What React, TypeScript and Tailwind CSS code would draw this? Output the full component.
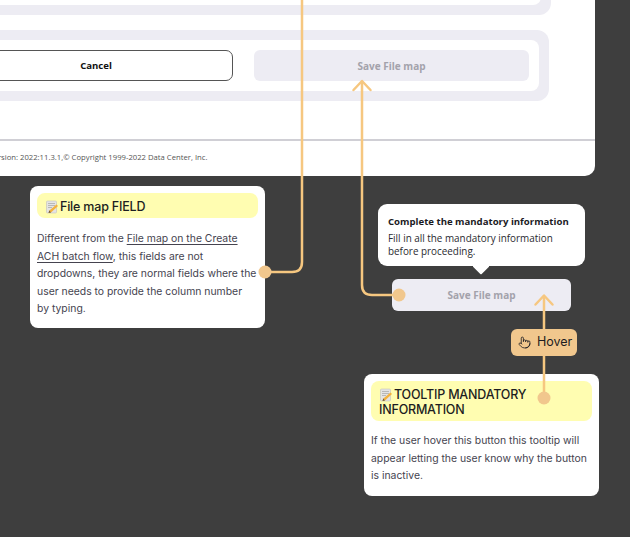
import { Pointer } from 'lucide-react'

const inter = 'font-["Inter",sans-serif]'
const noto = 'font-["Open_Sans",sans-serif]'

function MemoIcon() {
  return (
    <svg width="14" height="14" viewBox="0 0 14 14" className="shrink-0">
      <rect x="1.5" y="1" width="10" height="12" rx="1" fill="#e4e4e4" stroke="#b9b9b9" strokeWidth="0.5" />
      <path d="M3 3.5h7M3 5.5h7M3 7.5h4" stroke="#9a9a9a" strokeWidth="0.6" />
      <path d="M11.5 4.5L13 6L6 12.5L3.5 13L4.3 10.5Z" fill="#f3b23e" />
      <path d="M4.3 10.5L3.5 13L6 12.5Z" fill="#6b5a44" />
    </svg>
  )
}

function Connectors() {
  return (
    <svg width="630" height="537" viewBox="0 0 630 537" fill="none" className="absolute left-0 top-0">
      <g stroke="#f6c780" strokeWidth="2.500" strokeLinecap="round" strokeLinejoin="round">
        <path d="M302 -2V262Q302 272 292 272H265" />
        <path d="M362 82V285Q362 295 372 295H399" />
        <path d="M353.500 90L362 81L370.500 90" />
        <path d="M544 297V398" />
        <path d="M535.500 304.500L544 295.500L552.500 304.500" />
      </g>
      <circle cx="265" cy="272" r="6.500" fill="#f1c78d" />
      <circle cx="399" cy="295" r="6.500" fill="#f1c78d" />
      <circle cx="544" cy="398" r="6.500" fill="#f1c78d" />
    </svg>
  )
}

export default function App() {
  return (
    <div className="relative w-[630px] h-[537px] overflow-hidden bg-[#3e3e3e]">
      {/* screen behind the notes */}
      <div className={`w-[595px] h-[176px] bg-white rounded-br-[10px] overflow-hidden flex flex-col ${noto}`}>
        <div className="ml-[-61px] mt-[-35px] w-[612px] h-[50px] shrink-0 p-[10px] bg-[#edecf3] rounded-[12px]">
          <div className="h-full bg-white rounded-[8px]" />
        </div>
        <div className="ml-[-61px] mt-[15px] w-[610px] h-[71px] shrink-0 p-[10px] bg-[#edecf3] rounded-[12px]">
          <div className="h-full bg-white rounded-[8px] p-[10px] flex gap-[21px]">
            <button className="flex-1 rounded-[7px] border border-[#555555] pt-[1px] text-[9.600px] font-bold text-[#111111]">
              Cancel
            </button>
            <button className="w-[275px] rounded-[6px] bg-[#edecf3] pt-[1px] text-[10px] font-bold text-[#a3a2ab]">
              Save File map
            </button>
          </div>
        </div>
        <div className="mt-[38px] h-[2px] bg-[#d0cfd5] shrink-0" />
        <div className="ml-[-11px] mt-[10px] text-[7.700px] leading-[12px] whitespace-nowrap text-[#555555]">
          Version: 2022:11.3.1,© Copyright 1999-2022 Data Center, Inc.
        </div>
      </div>

      {/* note: file map field */}
      <div className={`absolute left-[30px] top-[186px] w-[235px] h-[142px] bg-white rounded-[8px] p-[7px] ${inter}`}>
        <div className="h-[25px] rounded-[8px] bg-[#fffdb1] pl-[8px] pt-[3px] flex items-center gap-[1px] text-[12.500px] font-medium tracking-[-0.2px] text-[#1d1d22]">
          <MemoIcon />
          <span>File map FIELD</span>
        </div>
        <p className="mt-[12px] text-[10.400px] leading-[17.500px] text-[#45434f] whitespace-nowrap">
          Different from the <span className="underline underline-offset-2">File map on the Create</span>
          <br />
          <span className="underline underline-offset-2">ACH batch flow</span>, this fields are not
          <br />
          dropdowns, they are normal fields where the
          <br />
          user needs to provide the column number
          <br />
          by typing.
        </p>
      </div>

      {/* tooltip */}
      <div className={`absolute left-[378px] top-[204px] w-[207px] h-[62px] bg-white rounded-[9px] px-[10px] pt-[10px] ${noto}`}>
        <div className="text-[9.600px] leading-[15px] font-bold text-[#1b1b1f] whitespace-nowrap">
          Complete the mandatory information
        </div>
        <div className="mt-[3px] text-[9.900px] leading-[13px] text-[#2a2a30]">
          Fill in all the mandatory information
          <br />
          before proceeding.
        </div>
        <div className="absolute left-[95px] top-[58px] w-[16px] h-[16px] overflow-hidden">
          <div className="w-[13px] h-[13px] bg-white rotate-45 translate-x-[1.500px] translate-y-[-3px] rounded-[1px]" />
        </div>
      </div>

      {/* hovered button */}
      <div className={`absolute left-[392px] top-[279px] w-[179px] h-[32px] rounded-[6px] bg-[#edecf3] pt-[1px] flex items-center justify-center text-[10px] font-bold text-[#a3a2ab] ${noto}`}>
        Save File map
      </div>

      {/* note: tooltip mandatory information */}
      <div className={`absolute left-[364px] top-[374px] w-[235px] h-[122px] bg-white rounded-[8px] p-[7px] ${inter}`}>
        <div className="h-[40px] rounded-[8px] bg-[#fffdb1] px-[8px] pt-[6px] text-[12.500px] leading-[15px] font-medium tracking-[-0.2px] text-[#1d1d22]">
          <div className="flex items-center gap-[1px]">
            <MemoIcon />
            <span>TOOLTIP MANDATORY</span>
          </div>
          <div>INFORMATION</div>
        </div>
        <p className="mt-[11px] text-[10.400px] leading-[17.500px] text-[#45434f] whitespace-nowrap">
          If the user hover this button this tooltip will
          <br />
          appear letting the user know why the button
          <br />
          is inactive.
        </p>
      </div>

      <Connectors />

      {/* hover tag sits on the connector */}
      <div className={`absolute left-[511px] top-[329px] w-[66px] h-[27px] rounded-[6px] bg-[#f1c78d] flex items-center pl-[7px] gap-[6px] text-[12.500px] text-[#1d1d22] ${inter}`}>
        <Pointer size={13} strokeWidth={1.500} className="shrink-0" />
        <span>Hover</span>
      </div>
    </div>
  )
}
